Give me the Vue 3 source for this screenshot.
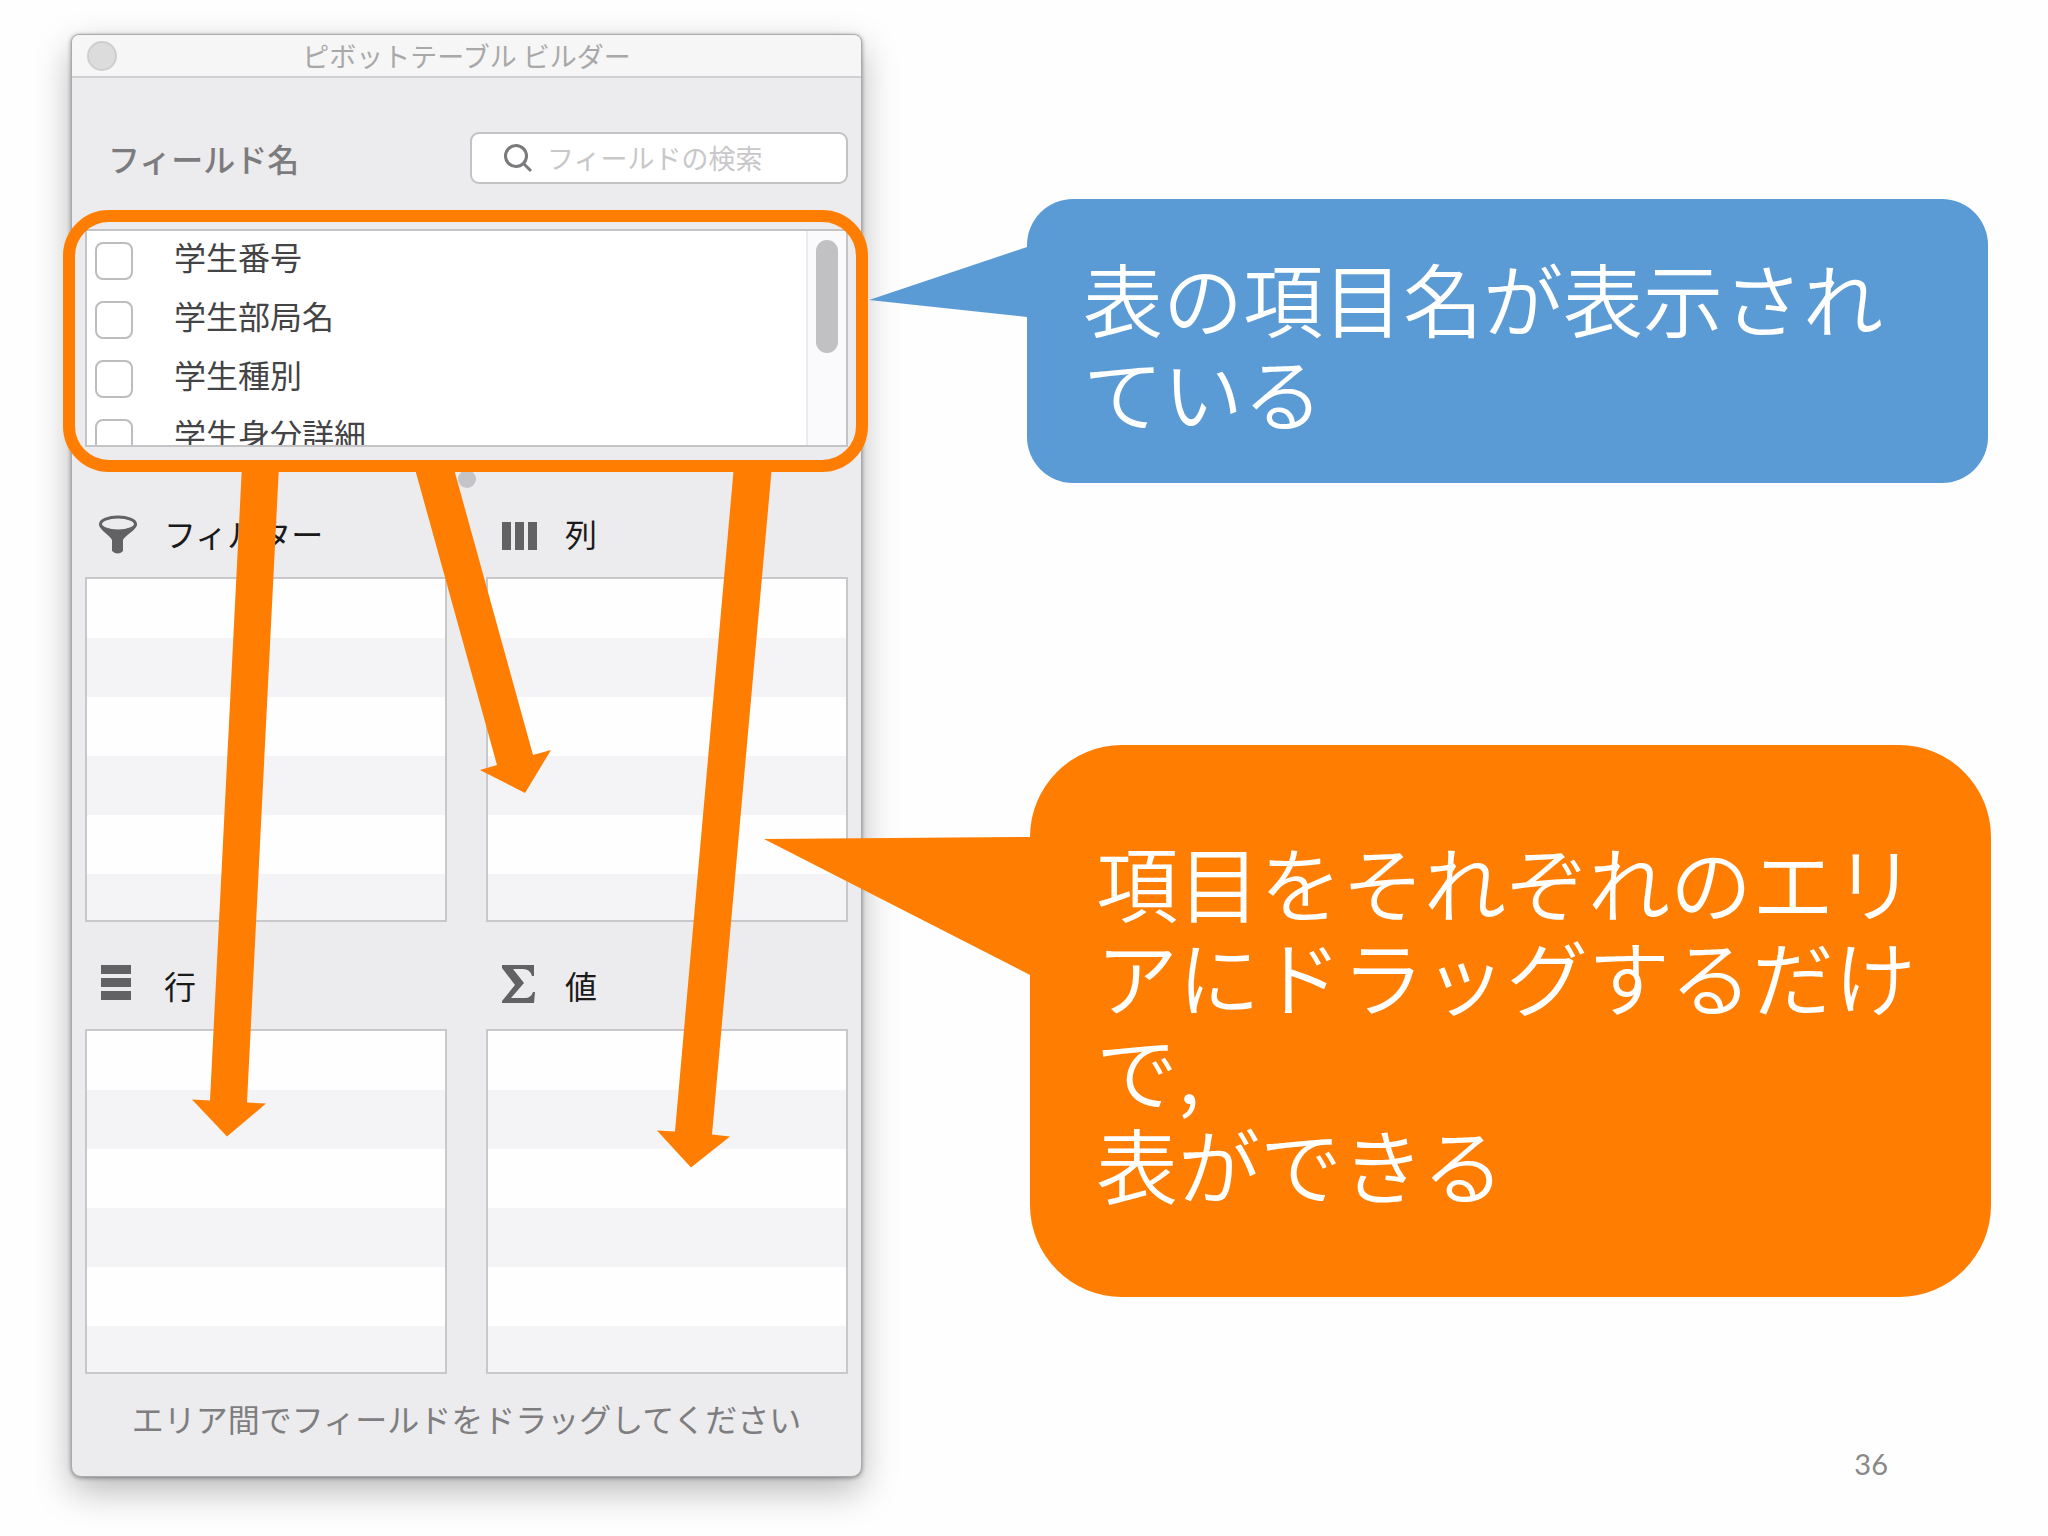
<script setup>
import { ref } from 'vue'

const query = ref('')
const fields = ref([
  { id: 'number', label: '学生番号', checked: false },
  { id: 'department', label: '学生部局名', checked: false },
  { id: 'type', label: '学生種別', checked: false },
  { id: 'status', label: '学生身分詳細', checked: false },
])
const areas = [
  { id: 'filter', label: 'フィルター' },
  { id: 'columns', label: '列' },
  { id: 'rows', label: '行' },
  { id: 'values', label: '値' },
]
</script>

<template>
  <main class="slide">
    <section class="palette" aria-labelledby="palette-title">
      <header class="titlebar">
        <button class="close" type="button" aria-label="閉じる"></button>
        <h1 id="palette-title" class="title">ピボットテーブル ビルダー</h1>
      </header>

      <div class="body">
        <div class="field-head">
          <h2 class="field-title">フィールド名</h2>
          <label class="search">
            <svg class="search-icon" viewBox="0 0 30 30" aria-hidden="true">
              <circle cx="12" cy="13" r="10.5" />
              <path d="M19.5 20.5 L27 28" />
            </svg>
            <input v-model="query" class="search-input" type="text" placeholder="フィールドの検索" aria-label="フィールドの検索" />
          </label>
        </div>

        <div class="list-wrap">
          <div class="list">
            <ul class="fields">
              <li v-for="field in fields" :key="field.id">
                <label class="field">
                  <input v-model="field.checked" class="check" type="checkbox" />
                  <span class="field-name">{{ field.label }}</span>
                </label>
              </li>
            </ul>
            <div class="track"><div class="thumb"></div></div>
          </div>
          <div class="highlight"></div>
        </div>

        <div class="splitter"></div>

        <div class="areas">
          <section v-for="area in areas" :key="area.id" class="area">
            <h2 class="area-head">
              <svg class="area-icon" viewBox="0 0 40 40" aria-hidden="true">
                <g v-if="area.id === 'filter'">
                  <path d="M1 11 C1 17 13 23 14 27 V38 Q20 43 25 38 V27 C26 23 39 17 39 11 Z" />
                  <ellipse class="rim" cx="20" cy="11" rx="17.5" ry="7" />
                </g>
                <path v-else-if="area.id === 'columns'" d="M3 9h9v28H3z M16 9h9v28h-9z M29 9h9v28h-9z" />
                <path v-else-if="area.id === 'rows'" d="M3 0h30v9H3z M3 13h30v9H3z M3 26h30v9H3z" />
                <path v-else d="M3 0 H35 V11 H33 Q31 4 24 4 H14 L25 18 L12 33 H26 Q32 33 34 27 H36 L35 38 H3 V36 L16 20 L3 3 Z" />
              </svg>
              <span>{{ area.label }}</span>
            </h2>
            <div class="drop"></div>
          </section>
        </div>

        <p class="hint">エリア間でフィールドをドラッグしてください</p>
      </div>

      <svg class="arrows" viewBox="72 35 789 1443" preserveAspectRatio="none" aria-hidden="true">
        <path d="M242 466 H279 L247 1104 L266 1105 L227 1138 L192 1101 L210 1102 Z" />
        <path d="M414 466 H453 L533 756 L551 751 L525 794 L480 771 L497 766 Z" />
        <path d="M734 466 H772 L712 1136 L730 1138 L691 1169 L657 1132 L675 1133 Z" />
      </svg>
    </section>

    <div class="notes">
      <div class="callout blue">
        <svg class="tail" viewBox="0 0 158 70" aria-hidden="true"><path d="M0 53 L158 0 V70 Z" /></svg>
        <p>表の項目名が表示されている</p>
      </div>
      <div class="callout orange">
        <svg class="tail" viewBox="0 0 266 138" aria-hidden="true"><path d="M0 2 L266 0 V138 Z" /></svg>
        <p>項目をそれぞれのエリアにドラッグするだけで,<br />表ができる</p>
      </div>
      <p class="page-number">36</p>
    </div>
  </main>
</template>

<style>
body {
  margin: 0;
  background: #fefefe;
}
</style>

<style scoped>
.slide {
  display: grid;
  grid-template-columns: minmax(0, 791fr) minmax(0, 964fr);
  align-items: start;
  column-gap: 165px;
  padding: 34px 57px 57px 71px;
  font-family: "Noto Sans CJK JP", sans-serif;
}
.slide * {
  box-sizing: border-box;
}
h1,
h2,
p,
ul {
  margin: 0;
  padding: 0;
  list-style: none;
}
.palette {
  position: relative;
  border: 1px solid #aaa9ab;
  border-radius: 8px 8px 10px 10px;
  background: #ecebed;
  box-shadow: 0 1px 4px rgba(0, 0, 0, 0.4), 0 14px 36px rgba(0, 0, 0, 0.28);
}
.titlebar {
  display: grid;
  grid-template-columns: 60px 1fr 60px;
  align-items: center;
  height: 43px;
  border-bottom: 2px solid #d0cfd1;
  border-radius: 8px 8px 0 0;
  background: #f6f6f6;
}
.close {
  width: 30px;
  height: 30px;
  margin-left: 15px;
  padding: 0;
  border: 2px solid #cfcecf;
  border-radius: 50%;
  background: #dcdcdc;
}
.title {
  color: #a9a8a9;
  font-size: 27px;
  font-weight: 400;
  line-height: 40px;
  text-align: center;
  white-space: nowrap;
}
.body {
  padding: 54px 13px 34px;
}
.field-head {
  display: flex;
  align-items: center;
  justify-content: space-between;
  gap: 20px;
  margin-bottom: 45px;
}
.field-title {
  padding-left: 23px;
  color: #7c7b7d;
  font-size: 32px;
  font-weight: 500;
  line-height: 48px;
  white-space: nowrap;
}
.search {
  display: flex;
  flex: 0 1 378px;
  align-items: center;
  gap: 13px;
  min-width: 0;
  height: 52px;
  padding: 0 16px 0 32px;
  border: 2px solid #c3c2c4;
  border-radius: 9px;
  background: #fff;
}
.search-icon {
  flex: none;
  width: 30px;
  height: 30px;
  fill: none;
  stroke: #7a797b;
  stroke-width: 3;
}
.search-input {
  flex: 1;
  min-width: 0;
  height: 44px;
  padding: 0;
  border: 0;
  outline: 0;
  background: transparent;
  color: #4a4a4a;
  font: 400 27px/44px "Noto Sans CJK JP", sans-serif;
}
.search-input::placeholder {
  color: #c8c7c9;
  opacity: 1;
}
.list-wrap {
  position: relative;
}
.list {
  display: flex;
  height: 218px;
  overflow: hidden;
  border: 2px solid #c4c3c5;
  background: #fff;
}
.fields {
  flex: 1;
}
.field {
  display: flex;
  align-items: flex-start;
  gap: 41px;
  height: 59px;
  padding-left: 8px;
}
.check {
  flex: none;
  width: 38px;
  height: 38px;
  margin: 11px 0 0;
  appearance: none;
  border: 2px solid #bdbcbe;
  border-radius: 8px;
  background: #fff;
}
.field-name {
  color: #444345;
  font-size: 32px;
  line-height: 50px;
}
.track {
  width: 40px;
  padding: 9px 8px;
  border-left: 2px solid #ebeaec;
  background: #faf9fb;
}
.thumb {
  width: 22px;
  height: 113px;
  border-radius: 11px;
  background: #c1c0c2;
}
.highlight {
  position: absolute;
  inset: -19px -20px -25px -22px;
  border: 12px solid #ff7d00;
  border-radius: 46px;
  pointer-events: none;
}
.splitter {
  width: 18px;
  height: 18px;
  margin: 23px auto 21px;
  border-radius: 50%;
  background: #c4c3c5;
}
.areas {
  display: grid;
  grid-template-columns: 1fr 1fr;
  gap: 39px;
}
.area-head {
  display: flex;
  align-items: center;
  gap: 26px;
  padding: 0 0 20px 13px;
  color: #1a1a1a;
  font-size: 32px;
  font-weight: 400;
  line-height: 48px;
}
.area-icon {
  width: 40px;
  height: 40px;
  overflow: visible;
  fill: #626163;
}
.rim {
  fill: #ecebed;
  stroke: #626163;
  stroke-width: 3;
}
.drop {
  height: 345px;
  border: 2px solid #c8c7c9;
  background: repeating-linear-gradient(#fefefe 0 59px, #f4f3f5 59px 118px);
}
.hint {
  padding-top: 20px;
  color: #7e7d7f;
  font-size: 32px;
  line-height: 48px;
  text-align: center;
  white-space: nowrap;
}
.arrows {
  position: absolute;
  inset: 0;
  width: 100%;
  height: 100%;
  fill: #ff7d00;
  pointer-events: none;
}
.notes {
  position: relative;
  padding-top: 165px;
}
.callout {
  position: relative;
  color: #fff;
  font-weight: 350;
  line-height: 94px;
}
.blue {
  margin-right: 3px;
  padding: 50px 64px 46px 56px;
  border-radius: 46px;
  background: #5b9bd5;
  font-size: 80px;
}
.orange {
  margin: 262px 0 0 3px;
  padding: 89px 66px 87px;
  border-radius: 92px;
  background: #ff7d00;
  font-size: 82px;
}
.tail {
  position: absolute;
  right: 100%;
}
.blue .tail {
  top: 48px;
  width: 158px;
  height: 70px;
  fill: #5b9bd5;
}
.orange .tail {
  top: 92px;
  width: 266px;
  height: 138px;
  fill: #ff7d00;
}
.page-number {
  margin: 147px 103px 0 0;
  color: #898989;
  font-family: Lato, sans-serif;
  font-size: 29px;
  line-height: 40px;
  text-align: right;
}
</style>
